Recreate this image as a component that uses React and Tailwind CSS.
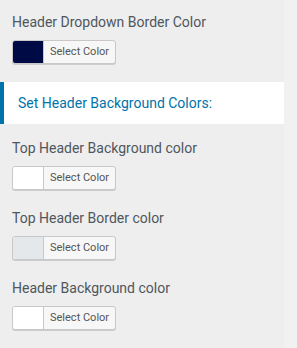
import React from 'react';

const ColorField = ({ label, color }) => (
  <div className="px-3">
    <div className="text-[14px] leading-5 text-[#4f565d]">{label}</div>
    <button
      type="button"
      className="mt-2 flex h-6 w-[104px] overflow-hidden rounded-[3px] border border-[#c8c8c8] bg-[#f7f7f7] shadow-[0_1px_0_#ccc]"
    >
      <span className="h-full w-[31px] border-r border-[#c8c8c8]" style={{ backgroundColor: color }} />
      <span className="flex h-full flex-1 items-center pl-[6px] text-[11px] text-[#555]">Select Color</span>
    </button>
  </div>
);

export default function App() {
  return (
    <div className="flex h-[348px] w-[297px] bg-[#f1f1f1]" style={{ fontFamily: 'Roboto, "Noto Sans", sans-serif' }}>
      <div className="w-[284px] bg-[#eeeeee] pt-3">
        <ColorField label="Header Dropdown Border Color" color="#000a44" />

        <div className="mt-[18px] flex h-[42px] items-center border-l-4 border-[#0073aa] bg-white pl-[14px]">
          <span className="text-[14px] leading-5 text-[#0073aa]">Set Header Background Colors:</span>
        </div>

        <div className="flex flex-col gap-[18px] pt-[14px]">
          <ColorField label="Top Header Background color" color="#ffffff" />
          <ColorField label="Top Header Border color" color="#e5e8eb" />
          <ColorField label="Header Background color" color="#ffffff" />
        </div>
      </div>
    </div>
  );
}
